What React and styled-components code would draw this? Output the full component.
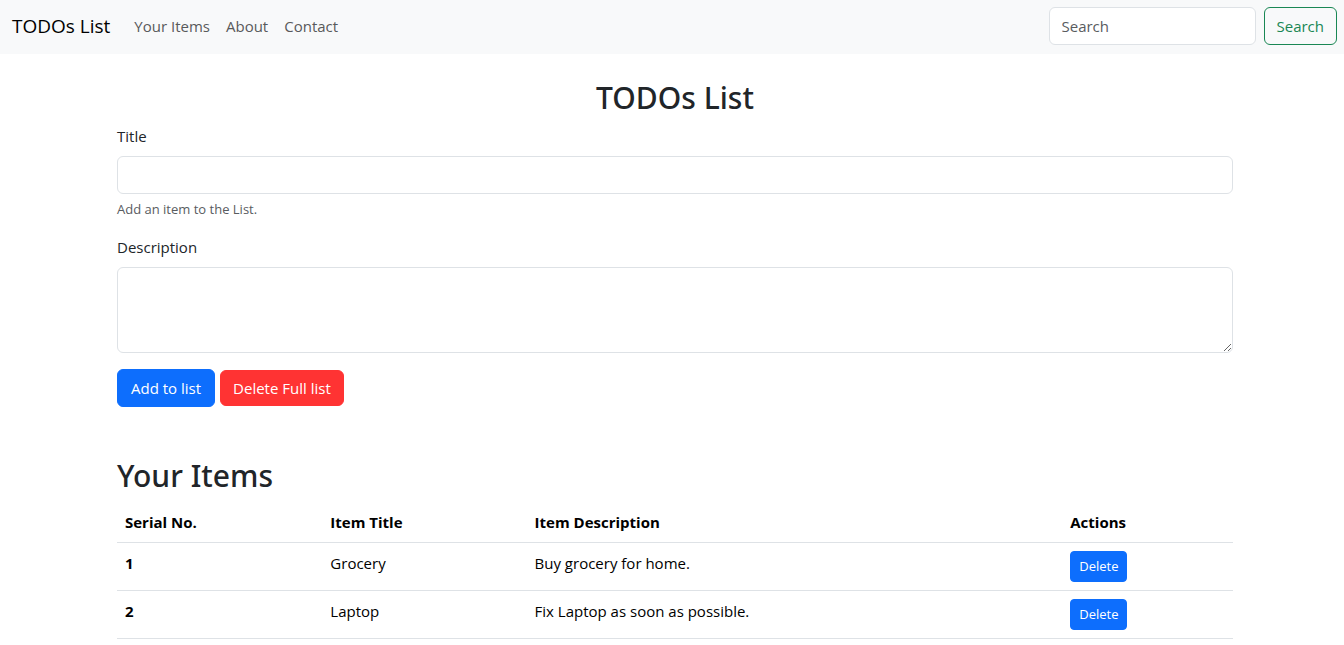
import React from "react";
import styled, { createGlobalStyle } from "styled-components";

const GlobalStyle = createGlobalStyle`
  *, *::before, *::after { box-sizing: border-box; }
  body {
    margin: 0;
    background: #fff;
    color: #212529;
    font-family: "Segoe UI", "Open Sans", "Noto Sans", sans-serif;
    font-size: 15px;
    line-height: 24px;
  }
  button, input, textarea { font: inherit; }
`;

const Navbar = styled.nav`
  display: flex;
  align-items: center;
  padding: 7px 7px 9px 12px;
  background: #f8f9fa;
`;

const Brand = styled.a`
  margin-right: 16px;
  font-size: 19px;
  line-height: 30px;
  color: #000;
  text-decoration: none;
  white-space: nowrap;
`;

const NavLinks = styled.ul`
  display: flex;
  flex: 1;
  margin: 0;
  padding: 0;
  list-style: none;
`;

const NavLink = styled.a`
  display: block;
  padding: 7px 8px;
  color: #595a5a;
  text-decoration: none;
`;

const SearchForm = styled.form`
  display: flex;
  gap: 8px;
`;

const field = `
  display: block;
  width: 100%;
  padding: 6px 12px;
  border: 1px solid #dee2e6;
  border-radius: 6px;
  background: #fff;
  color: #212529;
  &::placeholder { color: #595c5f; opacity: 1; }
`;

const TextInput = styled.input`
  ${field}
  height: 38px;
`;

const SearchInput = styled(TextInput)`
  width: 207px;
`;

const TextArea = styled.textarea`
  ${field}
  height: 86px;
  resize: vertical;
`;

const variants = {
  primary: "background: #0d6efd; border-color: #0d6efd; color: #fff;",
  danger: "background: #ff3333; border-color: #ff3333; color: #fff;",
  outline: "background: transparent; border-color: #198754; color: #198754;",
};

const Button = styled.button`
  padding: ${(p) => (p.$small ? "4px 8px" : "6px 12px")};
  border: 1px solid;
  border-radius: ${(p) => (p.$small ? "4px" : "6px")};
  font-size: ${(p) => (p.$small ? "13px" : "15px")};
  line-height: ${(p) => (p.$small ? "21px" : "24px")};
  white-space: nowrap;
  cursor: pointer;
  ${(p) => variants[p.$variant]}
`;

const AddButton = styled(Button)`
  padding: 6px 13px;
`;

const DeleteAllButton = styled(Button)`
  padding: 5px 12px;
`;

const Container = styled.main`
  max-width: 1140px;
  margin: 24px auto 0;
  padding: 0 9px 0 15px;
`;

const Heading = styled.h2`
  margin: 0 0 6px;
  font-family: "Segoe UI", "Noto Sans", "Open Sans", sans-serif;
  font-size: 30px;
  line-height: 40px;
  font-weight: 500;
  text-align: ${(p) => (p.$center ? "center" : "left")};
`;

const Field = styled.div`
  margin-bottom: 16px;
`;

const Label = styled.label`
  display: block;
  margin-bottom: 8px;
`;

const Hint = styled.div`
  margin-top: 5px;
  font-size: 13px;
  line-height: 20px;
  color: #595c5f;
`;

const Actions = styled.div`
  display: flex;
  align-items: center;
  gap: 5px;
`;

const Items = styled.section`
  margin-top: 49px;
`;

const Table = styled.table`
  width: 100%;
  border-collapse: collapse;
  table-layout: fixed;
  color: #000;
  text-align: left;
`;

const Col = styled.col`
  width: ${(p) => p.$width};
`;

const Cell = styled.td`
  padding: 8px;
  border-bottom: 1px solid #dee2e6;
  vertical-align: top;
`;

const HeadCell = styled(Cell).attrs({ as: "th" })`
  font-weight: 700;
`;

const items = [
  { title: "Grocery", description: "Buy grocery for home." },
  { title: "Laptop", description: "Fix Laptop as soon as possible." },
];

export default function App() {
  return (
    <>
      <GlobalStyle />
      <Navbar>
        <Brand href="#">TODOs List</Brand>
        <NavLinks>
          <li><NavLink href="#items">Your Items</NavLink></li>
          <li><NavLink href="#about">About</NavLink></li>
          <li><NavLink href="#contact">Contact</NavLink></li>
        </NavLinks>
        <SearchForm role="search">
          <SearchInput type="search" placeholder="Search" aria-label="Search" />
          <Button type="submit" $variant="outline">Search</Button>
        </SearchForm>
      </Navbar>
      <Container>
        <Heading $center>TODOs List</Heading>
        <Field>
          <Label htmlFor="title">Title</Label>
          <TextInput id="title" type="text" aria-describedby="title-hint" />
          <Hint id="title-hint">Add an item to the List.</Hint>
        </Field>
        <Field>
          <Label htmlFor="description">Description</Label>
          <TextArea id="description" rows={3} />
        </Field>
        <Actions>
          <AddButton type="button" $variant="primary">Add to list</AddButton>
          <DeleteAllButton type="button" $variant="danger">Delete Full list</DeleteAllButton>
        </Actions>
        <Items id="items">
          <Heading>Your Items</Heading>
          <Table>
            <colgroup>
              <Col $width="18.4%" />
              <Col $width="18.3%" />
              <Col $width="48%" />
              <Col />
            </colgroup>
            <thead>
              <tr>
                <HeadCell scope="col">Serial No.</HeadCell>
                <HeadCell scope="col">Item Title</HeadCell>
                <HeadCell scope="col">Item Description</HeadCell>
                <HeadCell scope="col">Actions</HeadCell>
              </tr>
            </thead>
            <tbody>
              {items.map((item, i) => (
                <tr key={item.title}>
                  <HeadCell scope="row">{i + 1}</HeadCell>
                  <Cell>{item.title}</Cell>
                  <Cell>{item.description}</Cell>
                  <Cell><Button type="button" $small $variant="primary">Delete</Button></Cell>
                </tr>
              ))}
            </tbody>
          </Table>
        </Items>
      </Container>
    </>
  );
}
